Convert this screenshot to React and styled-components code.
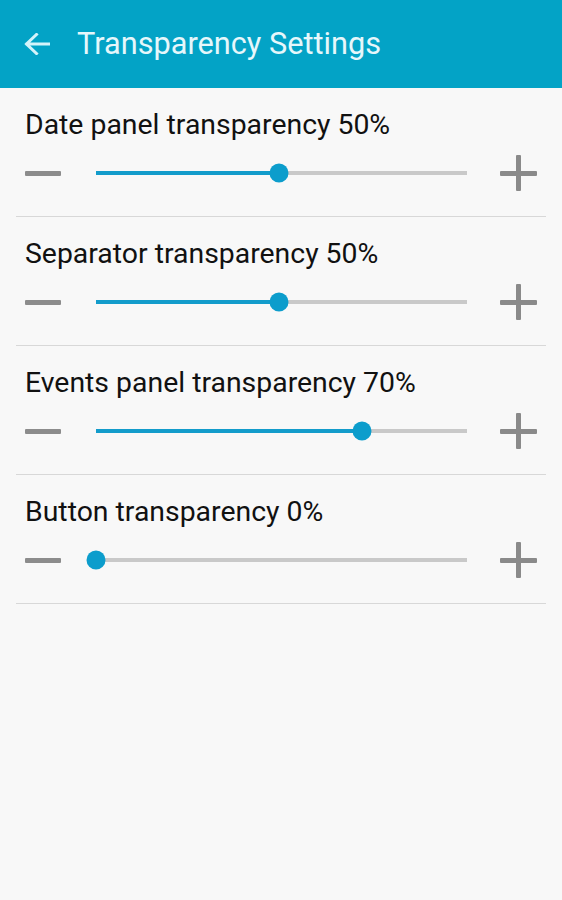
import React from "react";
import styled, { createGlobalStyle } from "styled-components";

const Global = createGlobalStyle`
  html, body { margin: 0; padding: 0; background: #f8f8f8; }
  body { font-family: Roboto, "Noto Sans", sans-serif; }
`;

const Page = styled.div`
  width: 562px;
  min-height: 900px;
  background: #f8f8f8;
`;

const Header = styled.header`
  height: 88px;
  background: #03a3c6;
  display: flex;
  align-items: center;
  padding-left: 24px;
  box-sizing: border-box;
`;

const BackIcon = styled.svg`
  width: 26px;
  height: 22px;
  flex: none;
`;

const Title = styled.h1`
  margin: 0 0 0 27px;
  font-family: Roboto, sans-serif;
  font-weight: 400;
  font-size: 30.7px;
  line-height: 36px;
  color: #e6f7fb;
`;

const List = styled.div`
  padding: 0 16px;
`;

const Row = styled.div`
  border-bottom: 1px solid #d8d8d8;
  padding: 20px 9px 28px;
  display: flex;
  flex-direction: column;
  gap: 17px;
`;

const Label = styled.div`
  font-size: 28.4px;
  line-height: 33px;
  color: #111;
  white-space: nowrap;
`;

const Controls = styled.div`
  display: flex;
  align-items: center;
  height: 30px;
`;

const Minus = styled.div`
  width: 36px;
  height: 5px;
  border-radius: 1px;
  background: #8c8c8c;
  flex: none;
`;

const Plus = styled.div`
  position: relative;
  width: 37px;
  height: 36px;
  flex: none;
  &::before, &::after {
    content: "";
    position: absolute;
    background: #8a8a8a;
    border-radius: 1px;
  }
  &::before { left: 0; right: 0; top: 15.5px; height: 5px; }
  &::after { top: 0; bottom: 0; left: 16px; width: 5px; }
`;

const Track = styled.div`
  position: relative;
  flex: 1;
  height: 4px;
  margin: 0 33px 0 35px;
  background: #c9c9c9;
`;

const Fill = styled.div`
  position: absolute;
  left: 0;
  top: 0;
  bottom: 0;
  background: #139ccb;
`;

const Thumb = styled.div`
  position: absolute;
  top: 50%;
  width: 19px;
  height: 19px;
  border-radius: 50%;
  background: #0c9dcc;
  transform: translate(-50%, -50%);
`;

const rows = [
  { label: "Date panel transparency 50%", pos: 0.493 },
  { label: "Separator transparency 50%", pos: 0.493 },
  { label: "Events panel transparency 70%", pos: 0.717 },
  { label: "Button transparency 0%", pos: 0 },
];

export default function App() {
  return (
    <Page>
      <Global />
      <Header>
        <BackIcon viewBox="0 0 26 22" fill="none">
          <path
            d="M25 11H3M12.5 1.5L2.5 11l10 9.5"
            stroke="#d4f3fa"
            strokeWidth="3"
            strokeLinecap="square"
          />
        </BackIcon>
        <Title>Transparency Settings</Title>
      </Header>
      <List>
        {rows.map((r) => (
          <Row key={r.label}>
            <Label>{r.label}</Label>
            <Controls>
              <Minus />
              <Track>
                <Fill style={{ width: `${r.pos * 100}%` }} />
                <Thumb style={{ left: `${r.pos * 100}%` }} />
              </Track>
              <Plus />
            </Controls>
          </Row>
        ))}
      </List>
    </Page>
  );
}
